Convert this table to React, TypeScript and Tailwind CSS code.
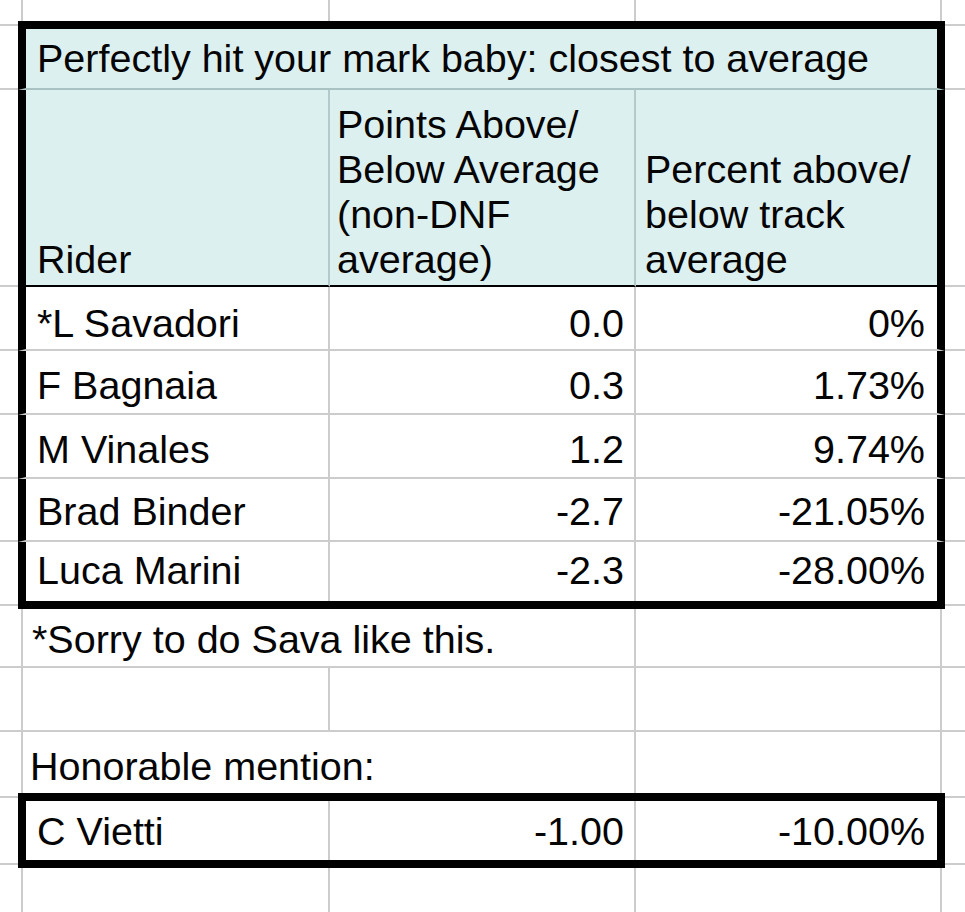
import React from "react";

const FONT = { fontFamily: '"Liberation Sans", Arial, sans-serif' };

type Cells = { a?: React.ReactNode; b?: React.ReactNode; c?: React.ReactNode };

function Strip() {
  return (
    <div className="flex h-[8px]">
      <div className="w-[18px] shrink-0 flex flex-col justify-center">
        <div className="h-[2px] bg-[#cccccc]" />
      </div>
      <div className="w-[927px] shrink-0 bg-black" />
      <div className="flex-1 flex flex-col justify-center">
        <div className="h-[2px] bg-[#cccccc]" />
      </div>
    </div>
  );
}

function BoxRow({ h, bottom, a, b, c, pb }: Cells & { h: string; bottom: boolean; pb: string }) {
  return (
    <div className={`flex ${h}`}>
      <div className={`w-[18px] shrink-0 ${bottom ? "border-b-2 border-b-[#cccccc]" : ""}`} />
      <div
        className={`w-[312px] shrink-0 flex items-end pl-[11px] border-l-8 border-l-black border-r-2 border-r-[#cccccc] ${
          bottom ? "border-b-2 border-b-[#cccccc]" : ""
        } ${pb}`}
      >
        <span className="leading-[45px] whitespace-nowrap">{a}</span>
      </div>
      <div
        className={`w-[306px] shrink-0 flex items-end justify-end pr-[10px] border-r-2 border-r-[#cccccc] ${
          bottom ? "border-b-2 border-b-[#cccccc]" : ""
        } ${pb}`}
      >
        <span className="leading-[45px] whitespace-nowrap">{b}</span>
      </div>
      <div
        className={`w-[309px] shrink-0 flex items-end justify-end pr-[12px] border-r-8 border-r-black ${
          bottom ? "border-b-2 border-b-[#cccccc]" : ""
        } ${pb}`}
      >
        <span className="leading-[45px] whitespace-nowrap">{c}</span>
      </div>
      <div className={`flex-1 ${bottom ? "border-b-2 border-b-[#cccccc]" : ""}`} />
    </div>
  );
}

const rows = [
  { a: "*L Savadori", b: "0.0", c: "0%", h: "h-[64px]", bottom: true, pb: "pb-[3px]" },
  { a: "F Bagnaia", b: "0.3", c: "1.73%", h: "h-[64px]", bottom: true, pb: "pb-[5px]" },
  { a: "M Vinales", b: "1.2", c: "9.74%", h: "h-[64px]", bottom: true, pb: "pb-[5px]" },
  { a: "Brad Binder", b: "-2.7", c: "-21.05%", h: "h-[63px]", bottom: true, pb: "pb-[6px]" },
  { a: "Luca Marini", b: "-2.3", c: "-28.00%", h: "h-[59px]", bottom: false, pb: "pb-[8px]" },
];

export default function App() {
  return (
    <div className="w-[965px] h-[912px] overflow-hidden bg-white text-[#050505] text-[39.5px]" style={FONT}>
      {/* top strip */}
      <div className="flex h-[21px]">
        <div className="w-[23px] shrink-0 border-r-2 border-r-[#cccccc]" />
        <div className="w-[307px] shrink-0 border-r-2 border-r-[#cccccc]" />
        <div className="w-[306px] shrink-0 border-r-2 border-r-[#cccccc]" />
        <div className="w-[306px] shrink-0 border-r-2 border-r-[#cccccc]" />
        <div className="flex-1" />
      </div>

      <Strip />

      {/* title row */}
      <div className="flex h-[61px]">
        <div className="w-[18px] shrink-0 border-b-2 border-b-[#cccccc]" />
        <div className="w-[927px] shrink-0 flex items-end pl-[11px] pb-[7px] bg-[#ddf0f0] border-l-8 border-r-8 border-l-black border-r-black border-b-2 border-b-[#a9c2c2]">
          <span className="leading-[45px] whitespace-nowrap">Perfectly hit your mark baby: closest to average</span>
        </div>
        <div className="flex-1 border-b-2 border-b-[#cccccc]" />
      </div>

      {/* header row */}
      <div className="flex h-[197px]">
        <div className="w-[18px] shrink-0 border-b-2 border-b-[#cccccc]" />
        <div className="w-[312px] shrink-0 flex items-end pl-[11px] pb-[3px] bg-[#ddf0f0] border-l-8 border-l-black border-r-2 border-r-[#b4c9c9] border-b-2 border-b-black">
          <span className="leading-[45px]">Rider</span>
        </div>
        <div className="w-[306px] shrink-0 flex items-end pl-[7px] pb-[3px] bg-[#ddf0f0] border-r-2 border-r-[#b4c9c9] border-b-2 border-b-black">
          <span className="leading-[45px] whitespace-nowrap">
            Points Above/
            <br />
            Below Average
            <br />
            (non-DNF
            <br />
            average)
          </span>
        </div>
        <div className="w-[309px] shrink-0 flex items-end pl-[9px] pb-[3px] bg-[#ddf0f0] border-r-8 border-r-black border-b-2 border-b-black">
          <span className="leading-[45px] whitespace-nowrap">
            Percent above/
            <br />
            below track
            <br />
            average
          </span>
        </div>
        <div className="flex-1 border-b-2 border-b-[#cccccc]" />
      </div>

      {rows.map((r) => (
        <BoxRow key={r.a} h={r.h} bottom={r.bottom} a={r.a} b={r.b} c={r.c} pb={r.pb} />
      ))}

      <Strip />

      {/* footnote row */}
      <div className="flex h-[59px]">
        <div className="w-[23px] shrink-0 border-r-2 border-r-[#cccccc] border-b-2 border-b-[#cccccc]" />
        <div className="w-[613px] shrink-0 flex items-end pl-[9px] pb-[4px] border-r-2 border-r-[#cccccc] border-b-2 border-b-[#cccccc]">
          <span className="leading-[45px] whitespace-nowrap">*Sorry to do Sava like this.</span>
        </div>
        <div className="w-[306px] shrink-0 border-r-2 border-r-[#cccccc] border-b-2 border-b-[#cccccc]" />
        <div className="flex-1 border-b-2 border-b-[#cccccc]" />
      </div>

      {/* empty row */}
      <div className="flex h-[64px]">
        <div className="w-[23px] shrink-0 border-r-2 border-r-[#cccccc] border-b-2 border-b-[#cccccc]" />
        <div className="w-[307px] shrink-0 border-r-2 border-r-[#cccccc] border-b-2 border-b-[#cccccc]" />
        <div className="w-[306px] shrink-0 border-r-2 border-r-[#cccccc] border-b-2 border-b-[#cccccc]" />
        <div className="w-[306px] shrink-0 border-r-2 border-r-[#cccccc] border-b-2 border-b-[#cccccc]" />
        <div className="flex-1 border-b-2 border-b-[#cccccc]" />
      </div>

      {/* honorable mention row */}
      <div className="flex h-[61px]">
        <div className="w-[23px] shrink-0 border-r-2 border-r-[#cccccc]" />
        <div className="w-[613px] shrink-0 flex items-end pl-[7px] pb-[4px] border-r-2 border-r-[#cccccc]">
          <span className="leading-[45px] whitespace-nowrap">Honorable mention:</span>
        </div>
        <div className="w-[306px] shrink-0 border-r-2 border-r-[#cccccc]" />
        <div className="flex-1" />
      </div>

      <Strip />

      <BoxRow h="h-[59px]" bottom={false} a="C Vietti" b="-1.00" c="-10.00%" pb="pb-[6px]" />

      <Strip />

      {/* bottom row */}
      <div className="flex h-[44px]">
        <div className="w-[23px] shrink-0 border-r-2 border-r-[#cccccc]" />
        <div className="w-[307px] shrink-0 border-r-2 border-r-[#cccccc]" />
        <div className="w-[306px] shrink-0 border-r-2 border-r-[#cccccc]" />
        <div className="w-[306px] shrink-0 border-r-2 border-r-[#cccccc]" />
        <div className="flex-1" />
      </div>
    </div>
  );
}
